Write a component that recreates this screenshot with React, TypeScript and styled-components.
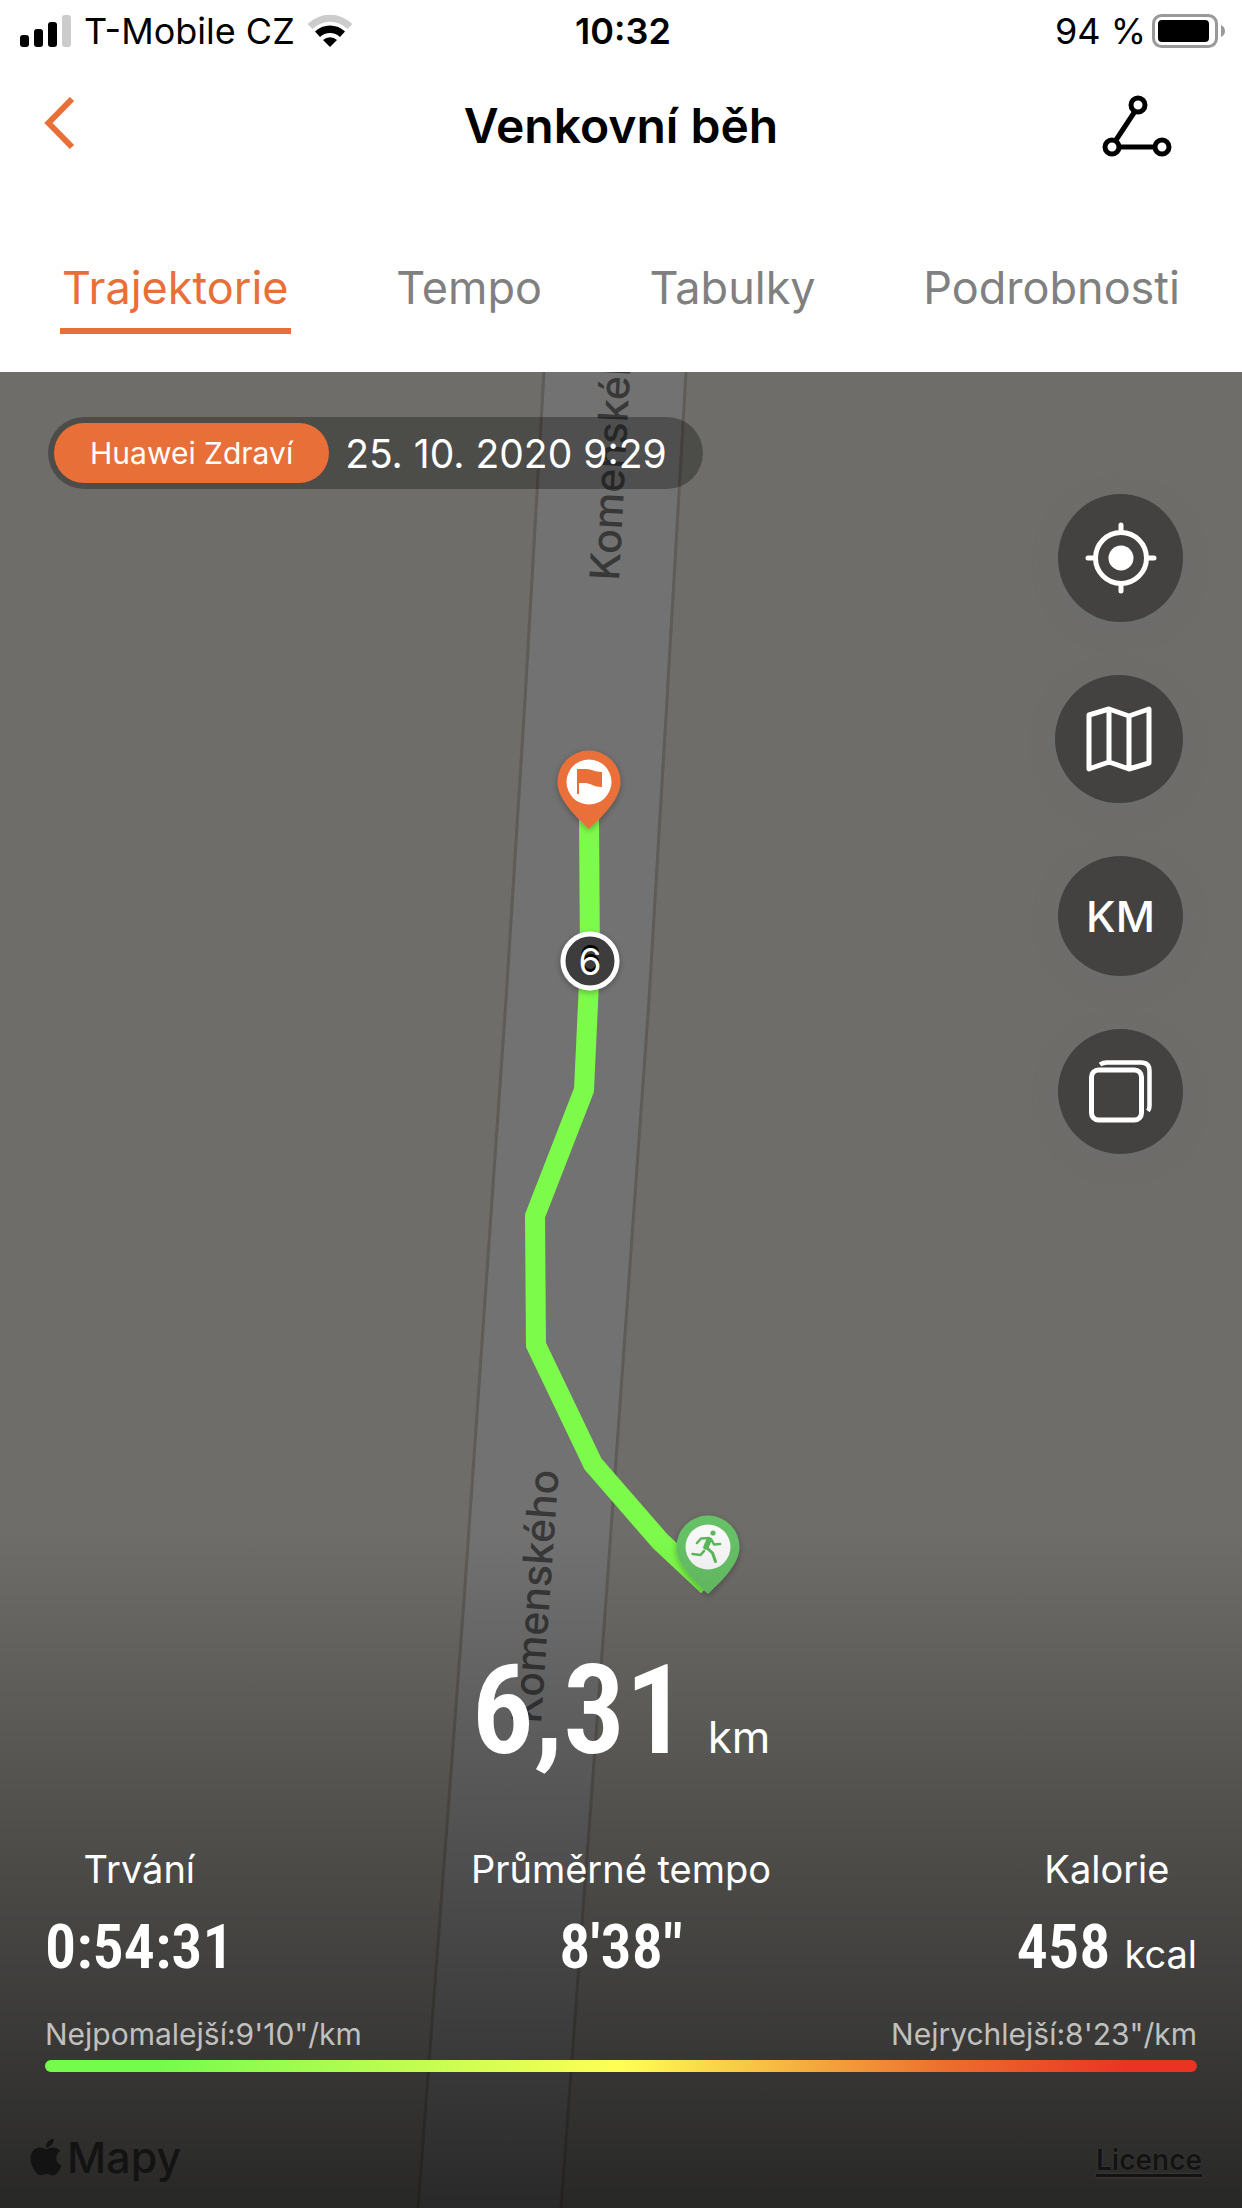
import React from "react";
import styled, { createGlobalStyle } from "styled-components";
import { FaApple } from "react-icons/fa";

const orange = "#e96f39";
const sans = `Inter, "Liberation Sans", sans-serif`;
const narrow = `"Roboto Condensed", "Liberation Sans Narrow", Roboto, sans-serif`;

const GlobalStyle = createGlobalStyle`
  * { box-sizing: border-box; }
  body { margin: 0; font-family: ${sans}; }
  button { border: 0; padding: 0; background: none; font: inherit; color: inherit; cursor: pointer; }
  svg { display: block; flex: none; }
`;

const Page = styled.div`
  min-height: 100vh;
  display: flex;
  flex-direction: column;
  background: #fff;
  color: #000;
`;

const StatusBar = styled.div`
  display: grid;
  grid-template-columns: 1fr auto 1fr;
  align-items: center;
  height: 60px;
  padding: 2px 16px 0 20px;
  font-size: 36px;
  line-height: 40px;
`;

const StatusGroup = styled.div<{ $end?: boolean; $gap: number }>`
  display: flex;
  align-items: center;
  gap: ${(p) => p.$gap}px;
  justify-content: ${(p) => (p.$end ? "flex-end" : "flex-start")};
`;

const Clock = styled.time`
  font-weight: 600;
`;

const NavBar = styled.header`
  display: grid;
  grid-template-columns: 1fr auto 1fr;
  align-items: center;
  height: 132px;
  padding: 0 44px;
`;

const NavButton = styled.button<{ $end?: boolean }>`
  && {
    justify-self: ${(p) => (p.$end ? "end" : "start")};
    padding-right: ${(p) => (p.$end ? 26 : 0)}px;
    color: ${(p) => (p.$end ? "#000" : orange)};
  }
`;

const Title = styled.h1`
  margin: 0;
  font-size: 48px;
  line-height: 60px;
  font-weight: 600;
`;

const Tabs = styled.nav`
  display: flex;
  justify-content: space-between;
  align-items: flex-start;
  height: 180px;
  padding: 64px 60px 0;
`;

const Tab = styled.button<{ $active?: boolean }>`
  && {
    height: 78px;
    padding: 0 2px 8px;
    font-size: 45px;
    line-height: 64px;
    color: ${(p) => (p.$active ? orange : "#808080")};
    border-bottom: 6px solid ${(p) => (p.$active ? orange : "transparent")};
  }
`;

const MapArea = styled.main`
  position: relative;
  flex: 1;
  display: flex;
  flex-direction: column;
  justify-content: space-between;
  overflow: hidden;
  background: #6e6d69;
`;

const MapCanvas = styled.svg`
  position: absolute;
  inset: 0;
  width: 100%;
  height: 100%;
  font-family: ${sans};
`;

const MapTop = styled.div`
  position: relative;
  display: flex;
  flex-direction: column;
  padding: 45px 59px 0 48px;
`;

const SourcePill = styled.div`
  align-self: flex-start;
  display: flex;
  align-items: center;
  gap: 16px;
  height: 72px;
  padding: 0 36px 0 6px;
  border-radius: 36px;
  background: rgba(0, 0, 0, 0.3);
  color: #fff;
  font-size: 39px;
`;

const SourceName = styled.span`
  padding: 0 36px;
  border-radius: 30px;
  background: ${orange};
  font-size: 30px;
  line-height: 60px;
`;

const Controls = styled.div`
  align-self: flex-end;
  display: flex;
  flex-direction: column;
  align-items: flex-end;
  gap: 53px;
  margin-top: 5px;
`;

const RoundButton = styled.button<{ $w: number; $h: number }>`
  && {
    display: flex;
    align-items: center;
    justify-content: center;
    width: ${(p) => p.$w}px;
    height: ${(p) => p.$h}px;
    border-radius: 50%;
    background: #434240;
    color: #fff;
    font-size: 43px;
    font-weight: 500;
    box-shadow: 0 6px 24px rgba(108, 110, 120, 0.4);
  }
`;

const Summary = styled.section`
  position: relative;
  padding: 98px 45px 24px;
  background: linear-gradient(rgba(0, 0, 0, 0), rgba(0, 0, 0, 0.64));
  color: #fff;
`;

const Distance = styled.div`
  display: flex;
  justify-content: center;
  align-items: baseline;
  gap: 20px;
  height: 160px;
  font-size: 44px;
`;

const DistanceValue = styled.strong`
  font-family: ${narrow};
  font-size: 124px;
  line-height: 164px;
  font-weight: 600;
`;

const Stats = styled.div`
  display: grid;
  grid-template-columns: 1fr auto 1fr;
  margin-top: 56px;
`;

const Stat = styled.div<{ $align: "start" | "center" | "end" }>`
  justify-self: ${(p) => p.$align};
  display: flex;
  flex-direction: column;
  align-items: center;
  font-size: 38px;
  line-height: 48px;
`;

const StatRow = styled.div`
  display: flex;
  align-items: baseline;
  gap: 14px;
  margin-top: 14px;
  line-height: 80px;
`;

const StatValue = styled.strong`
  font-family: ${narrow};
  font-size: 62px;
  font-weight: 600;
`;

const PaceRange = styled.div`
  display: flex;
  justify-content: space-between;
  margin-top: 20px;
  color: #c0c0bf;
  font-size: 30px;
  line-height: 40px;
`;

const PaceScale = styled.div`
  height: 12px;
  margin-top: 6px;
  border-radius: 6px;
  background: linear-gradient(90deg, #75fb4c 10%, #ffff54 50%, #ec6f2d 78%, #ea3323 94%);
`;

const Attribution = styled.footer`
  display: flex;
  justify-content: space-between;
  align-items: flex-end;
  margin: 58px -5px 0 -20px;
  color: #131313;
`;

const MapsBrand = styled.div`
  display: flex;
  align-items: center;
  font-size: 43px;
  line-height: 54px;
  font-weight: 500;
`;

const LicenceLink = styled.a`
  color: #131313;
  font-size: 28px;
  font-weight: 600;
  line-height: 48px;
  text-decoration: underline;
  text-decoration-thickness: 3px;
  text-underline-offset: 4px;
  text-shadow: 0 0 2px #444;
`;

const Signal = () => (
  <svg width="52" height="32" viewBox="0 0 52 32" aria-hidden="true">
    <rect x="0" y="20" width="9" height="12" rx="3" />
    <rect x="14" y="14" width="9" height="18" rx="3" />
    <rect x="28" y="7" width="9" height="25" rx="3" />
    <rect x="42" y="0" width="9" height="32" rx="3" fill="#ccc" />
  </svg>
);

const Wifi = () => (
  <svg width="46" height="34" viewBox="0 0 46 34" aria-hidden="true">
    <path d="M0.500 10 A32 32 0 0 1 45.500 10 L40.500 15 A25 25 0 0 0 5.500 15 Z" fill="#ccc" />
    <path d="M8 17.500 A21.500 21.500 0 0 1 38 17.500 L33 23 A14.500 14.500 0 0 0 13 23 Z" />
    <path d="M16 26 A10.500 10.500 0 0 1 30 26 L23 33 Z" />
  </svg>
);

const Battery = () => (
  <svg width="74" height="34" viewBox="0 0 74 34" aria-hidden="true">
    <rect x="1.500" y="1.500" width="63" height="31" rx="8" fill="none" stroke="#999" strokeWidth="3" />
    <rect x="6" y="6" width="51" height="22" rx="4" />
    <path d="M69 11 Q73 13 73 17 Q73 21 69 23 Z" fill="#999" />
  </svg>
);

const BackIcon = () => (
  <svg width="32" height="58" viewBox="0 0 32 58" fill="none" stroke="currentColor" strokeWidth="6" aria-hidden="true">
    <path d="M28 2 L4.500 26 L28 50" />
  </svg>
);

const ShareIcon = () => (
  <svg width="70" height="64" viewBox="0 0 70 64" fill="none" stroke="currentColor" strokeWidth="5" aria-hidden="true">
    <path d="M32.500 18 L14 46 M17 53 H53" />
    <circle cx="36" cy="11" r="7" />
    <circle cx="10" cy="53" r="7" />
    <circle cx="60" cy="53" r="7" />
  </svg>
);

const LocateIcon = () => (
  <svg width="72" height="72" viewBox="0 0 72 72" fill="none" stroke="currentColor" strokeWidth="5" strokeLinecap="round" aria-hidden="true">
    <circle cx="36" cy="36" r="25.500" />
    <circle cx="36" cy="36" r="12.500" fill="currentColor" stroke="none" />
    <path d="M36 3 V9 M36 63 V69 M3 36 H9 M63 36 H69" />
  </svg>
);

const FoldedMapIcon = () => (
  <svg width="68" height="68" viewBox="0 0 68 68" fill="none" stroke="currentColor" strokeWidth="5" strokeLinejoin="round" aria-hidden="true">
    <path d="M4 10 L24 4 L44 11 L64 4 V58 L44 64 L24 57 L4 64 Z M24 4 V57 M44 11 V64" />
  </svg>
);

const LayersIcon = () => (
  <svg width="64" height="64" viewBox="0 0 64 64" fill="none" stroke="currentColor" strokeWidth="5" aria-hidden="true">
    <rect x="2.500" y="10" width="50" height="50" rx="7" />
    <path d="M11 4.500 Q14 2.500 18 2.500 H52 Q60.500 2.500 60.500 11 V46 Q60.500 49 59 51" strokeWidth="4.500" />
  </svg>
);

const RunnerGlyph = () => (
  <g fill="none" stroke="#5cb85c" strokeWidth="2.600" strokeLinecap="round" strokeLinejoin="round">
    <circle cx="5" cy="-61" r="2.600" fill="#5cb85c" stroke="none" />
    <path d="M-11 -51 L-7 -55.500 L1 -56" />
    <path d="M1 -54 L-2 -47" strokeWidth="5.500" />
    <path d="M3 -55 L6 -49.500 L12 -50" />
    <path d="M-1 -46 L4.500 -41 L7.500 -32.500" strokeWidth="3" />
    <path d="M-4 -43 L-7.500 -39 L-15.500 -40" />
  </g>
);

const pinShape = "M0 0 C-9 -9 -31.500 -28 -31.500 -47 A31.500 31.500 0 0 1 31.500 -47 C31.500 -28 9 -9 0 0 Z";

const RouteMap = () => (
  <MapCanvas viewBox="0 372 1242 1836" preserveAspectRatio="xMidYMid slice" role="img" aria-label="Mapa trasy">
    <defs>
      <filter id="pinShadow" x="-30%" y="-30%" width="160%" height="160%">
        <feDropShadow dx="0" dy="2" stdDeviation="3" floodOpacity="0.3" />
      </filter>
    </defs>
    <path d="M544 372 L525 700 L506 1000 L464 1600 L418 2208 H561 L606 1600 L649 1000 L667 700 L686 372 Z" fill="#727272" />
    <path d="M544 372 L525 700 L506 1000 L464 1600 L418 2208 M561 2208 L606 1600 L649 1000 L667 700 L686 372" fill="none" stroke="#5f5b56" strokeWidth="3" />
    <g fill="#383838" fontSize="41" fontWeight="500">
      <text transform="translate(619 581) rotate(-87)">Komenského</text>
      <text transform="translate(541 1724) rotate(-86)">Komenského</text>
    </g>
    <path d="M589 815 L590 961 L584 1090 L535 1216 L536 1345 L593 1464 L660 1541 L708 1586" fill="none" stroke="#7dfb4b" strokeWidth="20" strokeLinejoin="miter" />
    <g transform="translate(589 829)">
      <path d={pinShape} fill={orange} filter="url(#pinShadow)" />
      <circle cy="-47" r="22.500" fill="#fff" />
      <path d="M-12 -60 H-3 C3 -60 5 -57 13 -57 V-42 C4 -42 2 -46 -4 -46 H-10 V-35 H-12 Z" fill={orange} />
    </g>
    <g transform="translate(708 1594)">
      <path d={pinShape} fill="#66c166" filter="url(#pinShadow)" />
      <circle cy="-47" r="22.500" fill="#f8f8f8" />
      <RunnerGlyph />
    </g>
    <circle cx="590" cy="961" r="27" fill="#3c3c3c" stroke="#fff" strokeWidth="5" filter="url(#pinShadow)" />
    <g fontSize="37" textAnchor="middle">
      <text x="590" y="972" fill="#000" aria-hidden="true">6</text>
      <text x="590" y="975" fill="#fff">6</text>
    </g>
  </MapCanvas>
);

const tabs = ["Trajektorie", "Tempo", "Tabulky", "Podrobnosti"];

export default function App() {
  const [active, setActive] = React.useState(tabs[0]);
  return (
    <Page>
      <GlobalStyle />
      <StatusBar>
        <StatusGroup $gap={12}>
          <Signal />
          <StatusGroup $gap={12}>
            <span>T-Mobile CZ</span>
            <Wifi />
          </StatusGroup>
        </StatusGroup>
        <Clock>10:32</Clock>
        <StatusGroup $gap={6} $end>
          <span>94 %</span>
          <Battery />
        </StatusGroup>
      </StatusBar>
      <NavBar>
        <NavButton aria-label="Zpět">
          <BackIcon />
        </NavButton>
        <Title>Venkovní běh</Title>
        <NavButton aria-label="Sdílet" $end>
          <ShareIcon />
        </NavButton>
      </NavBar>
      <Tabs>
        {tabs.map((name) => (
          <Tab key={name} $active={name === active} onClick={() => setActive(name)}>
            {name}
          </Tab>
        ))}
      </Tabs>
      <MapArea>
        <RouteMap />
        <MapTop>
          <SourcePill>
            <SourceName>Huawei Zdraví</SourceName>
            <span>25. 10. 2020 9:29</span>
          </SourcePill>
          <Controls>
            <RoundButton $w={125} $h={128} aria-label="Poloha">
              <LocateIcon />
            </RoundButton>
            <RoundButton $w={128} $h={128} aria-label="Typ mapy">
              <FoldedMapIcon />
            </RoundButton>
            <RoundButton $w={125} $h={120}>KM</RoundButton>
            <RoundButton $w={125} $h={125} aria-label="Vrstvy">
              <LayersIcon />
            </RoundButton>
          </Controls>
        </MapTop>
        <Summary>
          <Distance>
            <DistanceValue>6,31</DistanceValue>
            <span>km</span>
          </Distance>
          <Stats>
            <Stat $align="start">
              <span>Trvání</span>
              <StatRow>
                <StatValue>0:54:31</StatValue>
              </StatRow>
            </Stat>
            <Stat $align="center">
              <span>Průměrné tempo</span>
              <StatRow>
                <StatValue>8'38"</StatValue>
              </StatRow>
            </Stat>
            <Stat $align="end">
              <span>Kalorie</span>
              <StatRow>
                <StatValue>458</StatValue>
                <span>kcal</span>
              </StatRow>
            </Stat>
          </Stats>
          <PaceRange>
            <span>Nejpomalejší:9'10"/km</span>
            <span>Nejrychlejší:8'23"/km</span>
          </PaceRange>
          <PaceScale />
          <Attribution>
            <MapsBrand>
              <FaApple size={42} />
              Mapy
            </MapsBrand>
            <LicenceLink href="#licence">Licence</LicenceLink>
          </Attribution>
        </Summary>
      </MapArea>
    </Page>
  );
}
